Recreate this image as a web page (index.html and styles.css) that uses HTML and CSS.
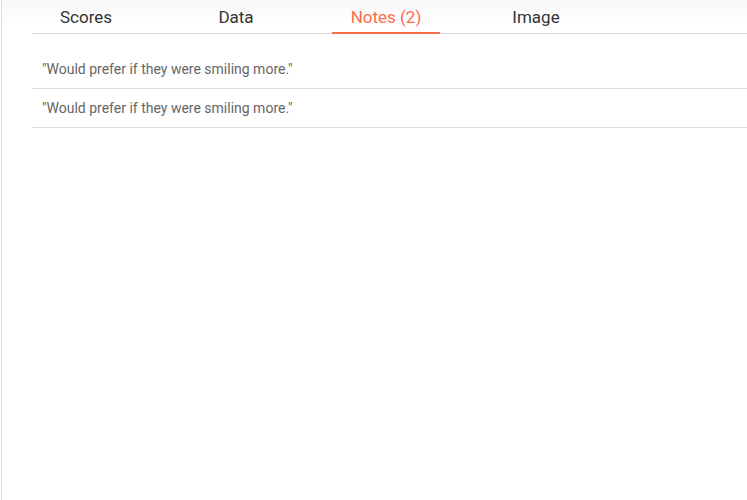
FILE: index.html
```html
<!DOCTYPE html>
<html lang="en">
<head>
    <meta charset="UTF-8">
    <meta name="viewport" content="width=device-width, initial-scale=1.0">
    <title>Notes</title>
    <link rel="stylesheet" href="styles.css">
</head>
<body>
    <div class="panel">
        <div class="tabs">
            <div class="tab">Scores</div>
            <div class="tab">Data</div>
            <div class="tab active">Notes (2)</div>
            <div class="tab">Image</div>
        </div>
        <div class="notes">
            <div class="note">"Would prefer if they were smiling more."</div>
            <div class="note">"Would prefer if they were smiling more."</div>
        </div>
    </div>
</body>
</html>
```

FILE: styles.css
```css
html, body {
    margin: 0;
    height: 100%;
    background: #ffffff;
}
body {
    font-family: Roboto, "Liberation Sans", sans-serif;
}
.panel {
    margin-left: 1px;
    height: 100%;
    border-left: 1px solid #dcdcdc;
    padding-left: 30px;
    background: linear-gradient(#f7f7f7, #ffffff 22px);
    box-sizing: border-box;
}
.tabs {
    display: flex;
    gap: 42px;
    height: 33px;
    border-bottom: 1px solid #dedede;
}
.tab {
    width: 108px;
    padding: 7px 0 5px;
    line-height: 20px;
    font-size: 17px;
    color: #333333;
    text-align: center;
    border-bottom: 2px solid transparent;
    margin-bottom: -1px;
    cursor: pointer;
}
.tab.active {
    color: #fb6b4c;
    border-bottom-color: #fb6b4c;
}
.notes {
    padding-top: 16px;
}
.note {
    height: 38px;
    line-height: 38px;
    padding-left: 10px;
    font-size: 14px;
    color: #666666;
    border-bottom: 1px solid #dedede;
}
```
